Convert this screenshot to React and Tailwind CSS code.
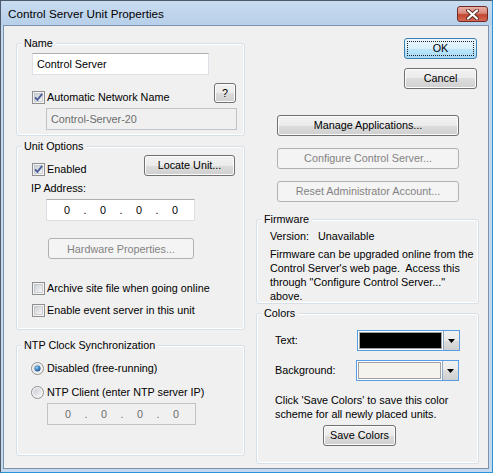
import React from "react";

const FONT = { fontFamily: '"Liberation Sans", Arial, sans-serif' };

const Check = ({ checked }) => (
    <svg width="13" height="13" viewBox="0 0 13 13" className="shrink-0">
        <defs>
            <linearGradient id="cbFill" x1="0" y1="0" x2="1" y2="1">
                <stop offset="0" stopColor="#cbcfd5" />
                <stop offset="1" stopColor="#f7f7f7" />
            </linearGradient>
        </defs>
        <rect x="0.5" y="0.5" width="12" height="12" fill="#f4f4f4" stroke="#8f8f8f" />
        <rect x="2.5" y="2.5" width="8" height="8" fill="url(#cbFill)" stroke="#b3b8bd" strokeWidth="0.6" />
        {checked && (
            <path d="M3 6.3 L5.4 8.8 L10.2 2.8" fill="none" stroke="#4a5f9b" strokeWidth="1.9" />
        )}
    </svg>
);

const Radio = ({ checked }) => (
    <svg width="13" height="13" viewBox="0 0 13 13" className="shrink-0">
        <defs>
            <linearGradient id="rdFill" x1="0" y1="0" x2="1" y2="1">
                <stop offset="0" stopColor="#c9ccd2" />
                <stop offset="1" stopColor="#f6f6f6" />
            </linearGradient>
            <radialGradient id="rdDot" cx="0.4" cy="0.35" r="0.7">
                <stop offset="0" stopColor="#9fd7fb" />
                <stop offset="0.5" stopColor="#3f84c2" />
                <stop offset="1" stopColor="#1b4f86" />
            </radialGradient>
        </defs>
        <circle cx="6.5" cy="6.5" r="6" fill="#f4f4f4" stroke="#8f8f8f" />
        <circle cx="6.5" cy="6.5" r="4.2" fill="url(#rdFill)" />
        {checked && <circle cx="6.5" cy="6.5" r="3" fill="url(#rdDot)" />}
    </svg>
);

const Button = ({ children, disabled, focused, className = "" }) => (
    <div
        className={
            disabled
                ? `flex items-center justify-center h-[21px] rounded-[3px] border border-[#adb2b5] bg-[#f4f4f4] text-[#838383] ${className}`
                : focused
                ? `flex items-center justify-center h-[21px] rounded-[3px] border border-[#3c7fb1] bg-[linear-gradient(#eaf6fd_0%,#d9f0fc_50%,#bee6fd_50%,#a7d9f5_100%)] p-[2px] ${className}`
                : `flex items-center justify-center h-[21px] rounded-[3px] border border-[#707070] bg-[linear-gradient(#f2f2f2_0%,#ebebeb_50%,#dddddd_50%,#cfcfcf_100%)] shadow-[inset_0_0_0_1px_#fcfcfc] ${className}`
        }
    >
        {focused ? (
            <span className="w-full h-full flex items-center justify-center border border-dotted border-[#222]">
                {children}
            </span>
        ) : (
            children
        )}
    </div>
);

const Group = ({ title, className = "", children }) => (
    <fieldset
        className={`rounded-[3px] border border-[#d5dfe5] shadow-[inset_0_0_0_1px_#ffffff] ${className}`}
    >
        <legend className="ml-[4px] px-[3px] leading-[13px] bg-[#f0f0f0]">{title}</legend>
        {children}
    </fieldset>
);

const IpBox = ({ disabled, className = "" }) => (
    <div
        className={`flex items-center h-[22px] w-[149px] pl-[10px] border ${
            disabled
                ? "bg-[#f0f0f0] border-[#c2c3c9] text-[#6d6d6d]"
                : "bg-white border-[#dcdfe6] border-t-[#abadb3] text-black"
        } ${className}`}
    >
        {["0", ".", "0", ".", "0", ".", "0"].map((part, i) => (
            <span
                key={i}
                className={i % 2 === 0 ? "w-[20px] text-center" : "w-[16px] text-center"}
            >
                {part}
            </span>
        ))}
    </div>
);

const ColorPicker = ({ color, className = "" }) => (
    <div className={`flex items-center h-[21px] w-[103px] border border-[#569de5] bg-white ${className}`}>
        <div className="flex-1 h-full p-[1px]">
            <div className="h-full border border-[#a0a0a0]" style={{ backgroundColor: color }} />
        </div>
        <div className="w-[16px] h-full flex items-center justify-center border-l border-[#8aa9c9] bg-[linear-gradient(#f2f2f2_0%,#ebebeb_50%,#dddddd_50%,#cfcfcf_100%)]">
            <svg width="7" height="4" viewBox="0 0 7 4">
                <path d="M0 0 H7 L3.5 4 Z" fill="#000" />
            </svg>
        </div>
    </div>
);

const App = () => {
    return (
        <div
            className="w-[493px] h-[473px] flex flex-col bg-[#c4d8ee] border border-[#4c5a6b] border-r-[#2a95d6] border-b-[#2a95d6] text-[10.8px] text-black"
            style={FONT}
        >
            {/* title bar */}
            <div className="h-[24px] flex items-center justify-between pl-[7px] pr-[4px] bg-[linear-gradient(#c9dcf0,#b7cfe9)]">
                <span className="mt-[1px] text-[11.7px] text-black">Control Server Unit Properties</span>
                <div className="mt-[2px] w-[31px] h-[16px] rounded-[3px] border border-[#6e2a22] bg-[linear-gradient(#e8b0a6_0%,#d8877a_45%,#c3452f_55%,#d46a55_100%)] flex items-center justify-center">
                    <svg width="13" height="11" viewBox="0 0 13 11">
                        <path d="M2 1.5 L11 9.5 M11 1.5 L2 9.5" stroke="#5a2a26" strokeWidth="4" strokeLinecap="round" />
                        <path d="M2 1.5 L11 9.5 M11 1.5 L2 9.5" stroke="#ffffff" strokeWidth="2.2" strokeLinecap="round" />
                    </svg>
                </div>
            </div>

            {/* client area */}
            <div className="flex-1 mx-[2px] mb-[3px] mr-[3px] border border-[#7c92ad] bg-[#f0f0f0] flex pt-[11px] pl-[12px]">
                {/* left column */}
                <div className="w-[229px] flex flex-col">
                    <Group title="Name" className="h-[99px]">
                        <div className="flex flex-col pt-[3px]">
                            <div className="ml-[15px] w-[177px] h-[22px] flex items-center pl-[4px] bg-white border border-[#dcdfe6] border-t-[#abadb3]">
                                Control Server
                            </div>
                            <div className="flex items-start mt-[8px]">
                                <div className="ml-[15px] mt-[6px] flex items-center gap-[2px]">
                                    <Check checked />
                                    <span>Automatic Network Name</span>
                                </div>
                                <Button className="ml-auto mr-[8px] w-[22px] !h-[20px]">?</Button>
                            </div>
                            <div className="ml-[29px] mt-[3px] w-[191px] h-[22px] flex items-center pl-[4px] text-[#6d6d6d] bg-[#f0f0f0] border border-[#c2c3c9]">
                                Control-Server-20
                            </div>
                        </div>
                    </Group>

                    <Group title="Unit Options" className="mt-[4px] h-[190px]">
                        <div className="flex flex-col pt-[2px]">
                            <div className="flex items-start">
                                <div className="ml-[15px] mt-[6px] flex items-center gap-[2px]">
                                    <Check checked />
                                    <span>Enabled</span>
                                </div>
                                <Button className="ml-auto mr-[9px] w-[91px]">Locate Unit...</Button>
                            </div>
                            <div className="ml-[14px] mt-[5px] leading-[13px]">IP Address:</div>
                            <IpBox className="ml-[29px] mt-[4px]" />
                            <Button disabled className="ml-[31px] mt-[17px] w-[146px]">
                                Hardware Properties...
                            </Button>
                            <div className="ml-[15px] mt-[21px] flex items-center gap-[2px]">
                                <Check />
                                <span>Archive site file when going online</span>
                            </div>
                            <div className="ml-[15px] mt-[6px] flex items-center gap-[2px]">
                                <Check />
                                <span>Enable event server in this unit</span>
                            </div>
                        </div>
                    </Group>

                    <Group title="NTP Clock Synchronization" className="mt-[9px] h-[117px]">
                        <div className="flex flex-col pt-[8px]">
                            <div className="ml-[14px] flex items-center gap-[3px]">
                                <Radio checked />
                                <span>Disabled (free-running)</span>
                            </div>
                            <div className="ml-[14px] mt-[8px] flex items-center gap-[3px]">
                                <Radio />
                                <span>NTP Client (enter NTP server IP)</span>
                            </div>
                            <IpBox disabled className="ml-[30px] mt-[3px]" />
                        </div>
                    </Group>
                </div>

                {/* right column */}
                <div className="ml-[11px] w-[223px] flex flex-col">
                    <Button focused className="self-end mr-[2px] mt-[1px] w-[73px]">OK</Button>
                    <Button className="self-end mr-[2px] mt-[9px] w-[73px]">Cancel</Button>
                    <Button className="ml-[21px] mt-[26px] w-[182px]">Manage Applications...</Button>
                    <Button disabled className="ml-[21px] mt-[12px] w-[182px]">
                        Configure Control Server...
                    </Button>
                    <Button disabled className="ml-[21px] mt-[12px] w-[182px]">
                        Reset Administrator Account...
                    </Button>

                    <Group title="Firmware" className="mt-[11px] h-[91px]">
                        <div className="pl-[13px] pt-[3px] leading-[14px]">
                            <div>Version:&nbsp;&nbsp; Unavailable</div>
                            <div className="mt-[4px]">
                                Firmware can be upgraded online from the
                                <br />
                                Control Server's web page.&nbsp; Access this
                                <br />
                                through "Configure Control Server..."
                                <br />
                                above.
                            </div>
                        </div>
                    </Group>

                    <Group title="Colors" className="mt-[3px] h-[157px]">
                        <div className="flex flex-col pt-[10px]">
                            <div className="flex items-center">
                                <span className="ml-[18px] w-[82px]">Text:</span>
                                <ColorPicker color="#000000" />
                            </div>
                            <div className="flex items-center mt-[9px]">
                                <span className="ml-[18px] w-[81px]">Background:</span>
                                <ColorPicker color="#f5f3ee" />
                            </div>
                            <div className="ml-[18px] mt-[12px] leading-[14px]">
                                Click 'Save Colors' to save this color
                                <br />
                                scheme for all newly placed units.
                            </div>
                            <Button className="ml-[66px] mt-[4px] w-[73px]">Save Colors</Button>
                        </div>
                    </Group>
                </div>
            </div>
        </div>
    );
};

export default App;
